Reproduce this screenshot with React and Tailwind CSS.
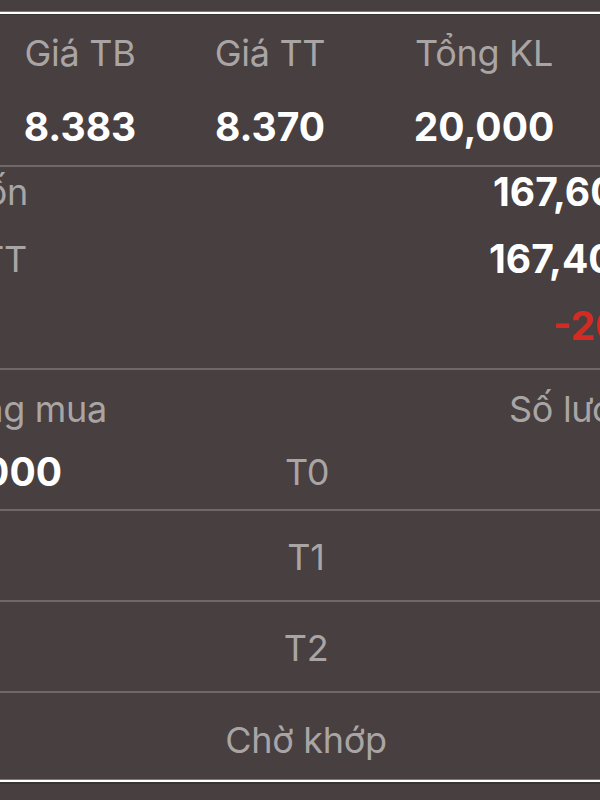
export default function App() {
  const font = { fontFamily: 'Inter, "Noto Sans", sans-serif' };
  const label = "shrink-0 text-[36px] leading-[40px] text-[#aaa5a5] whitespace-nowrap tracking-[-0.3px]";
  const value = "shrink-0 text-[39px] leading-[40px] font-bold text-white whitespace-nowrap";
  return (
    <div className="w-[600px] h-[800px] bg-[#473f40] overflow-hidden flex flex-col" style={font}>
      <div className="h-[11px] shrink-0" />
      <div className="h-[1px] bg-[#7d7677] shrink-0" />
      <div className="h-[2px] bg-white shrink-0" />
      <div className="h-[1px] bg-[#3a3334] shrink-0" />

      {/* summary columns */}
      <div className="pt-[18px] pb-[18px] grid grid-cols-[160px_220px_208px] gap-y-[34px] shrink-0">
        <div className={`text-center ${label}`}>Giá TB</div>
        <div className={`text-center ${label}`}>Giá TT</div>
        <div className={`text-center ${label}`}>Tổng KL</div>
        <div className={`text-center ${value}`}>8.383</div>
        <div className={`text-center ${value}`}>8.370</div>
        <div className={`text-center ${value}`}>20,000</div>
      </div>
      <div className="h-[2px] bg-[#6f6869] shrink-0" />

      {/* values */}
      <div className="pt-[5px] pb-[22px] flex flex-col gap-[27px] shrink-0">
        <div className="h-[40px] flex items-center">
          <div className={`w-[300px] -ml-[272px] text-right ${label}`}>Giá vốn</div>
          <div className={`ml-[465px] ${value}`}>167,600,000</div>
        </div>
        <div className="h-[40px] flex items-center">
          <div className={`w-[300px] -ml-[273px] text-right ${label}`}>Giá TT</div>
          <div className={`ml-[462px] ${value}`}>167,400,000</div>
        </div>
        <div className="h-[40px] flex items-center">
          <div className={`w-[300px] -ml-[305px] text-right ${label}`}>Lãi/lỗ</div>
          <div className={`ml-[558px] shrink-0 text-[39px] leading-[40px] font-bold text-[#d42a22] whitespace-nowrap`}>-200,000</div>
        </div>
      </div>
      <div className="h-[2px] bg-[#6f6869] shrink-0" />

      {/* holdings */}
      <div className="pt-[19px] pb-[17px] flex flex-col gap-[23px] shrink-0">
        <div className="h-[40px] flex items-center">
          <div className={`w-[300px] -ml-[193px] text-right ${label}`}>Khối lượng mua</div>
          <div className={`ml-[402px] ${label}`}>Số lượng</div>
        </div>
        <div className="h-[40px] flex items-center">
          <div className={`w-[300px] -ml-[238px] text-right ${value}`}>20,000</div>
          <div className={`ml-[223px] ${label}`}>T0</div>
        </div>
      </div>
      <div className="h-[2px] bg-[#6f6869] shrink-0" />

      <div className={`pt-[26px] pb-[23px] pl-[12px] text-center ${label}`}>T1</div>
      <div className="h-[2px] bg-[#6f6869] shrink-0" />
      <div className={`pt-[26px] pb-[23px] pl-[12px] text-center ${label}`}>T2</div>
      <div className="h-[2px] bg-[#6f6869] shrink-0" />
      <div className={`pt-[27px] pb-[19px] pl-[12px] text-center ${label}`}>Chờ khớp</div>

      <div className="h-[1px] bg-[#7d7677] shrink-0" />
      <div className="h-[2px] bg-white shrink-0" />
      <div className="h-[2px] bg-[#3a3334] shrink-0" />
    </div>
  );
}
